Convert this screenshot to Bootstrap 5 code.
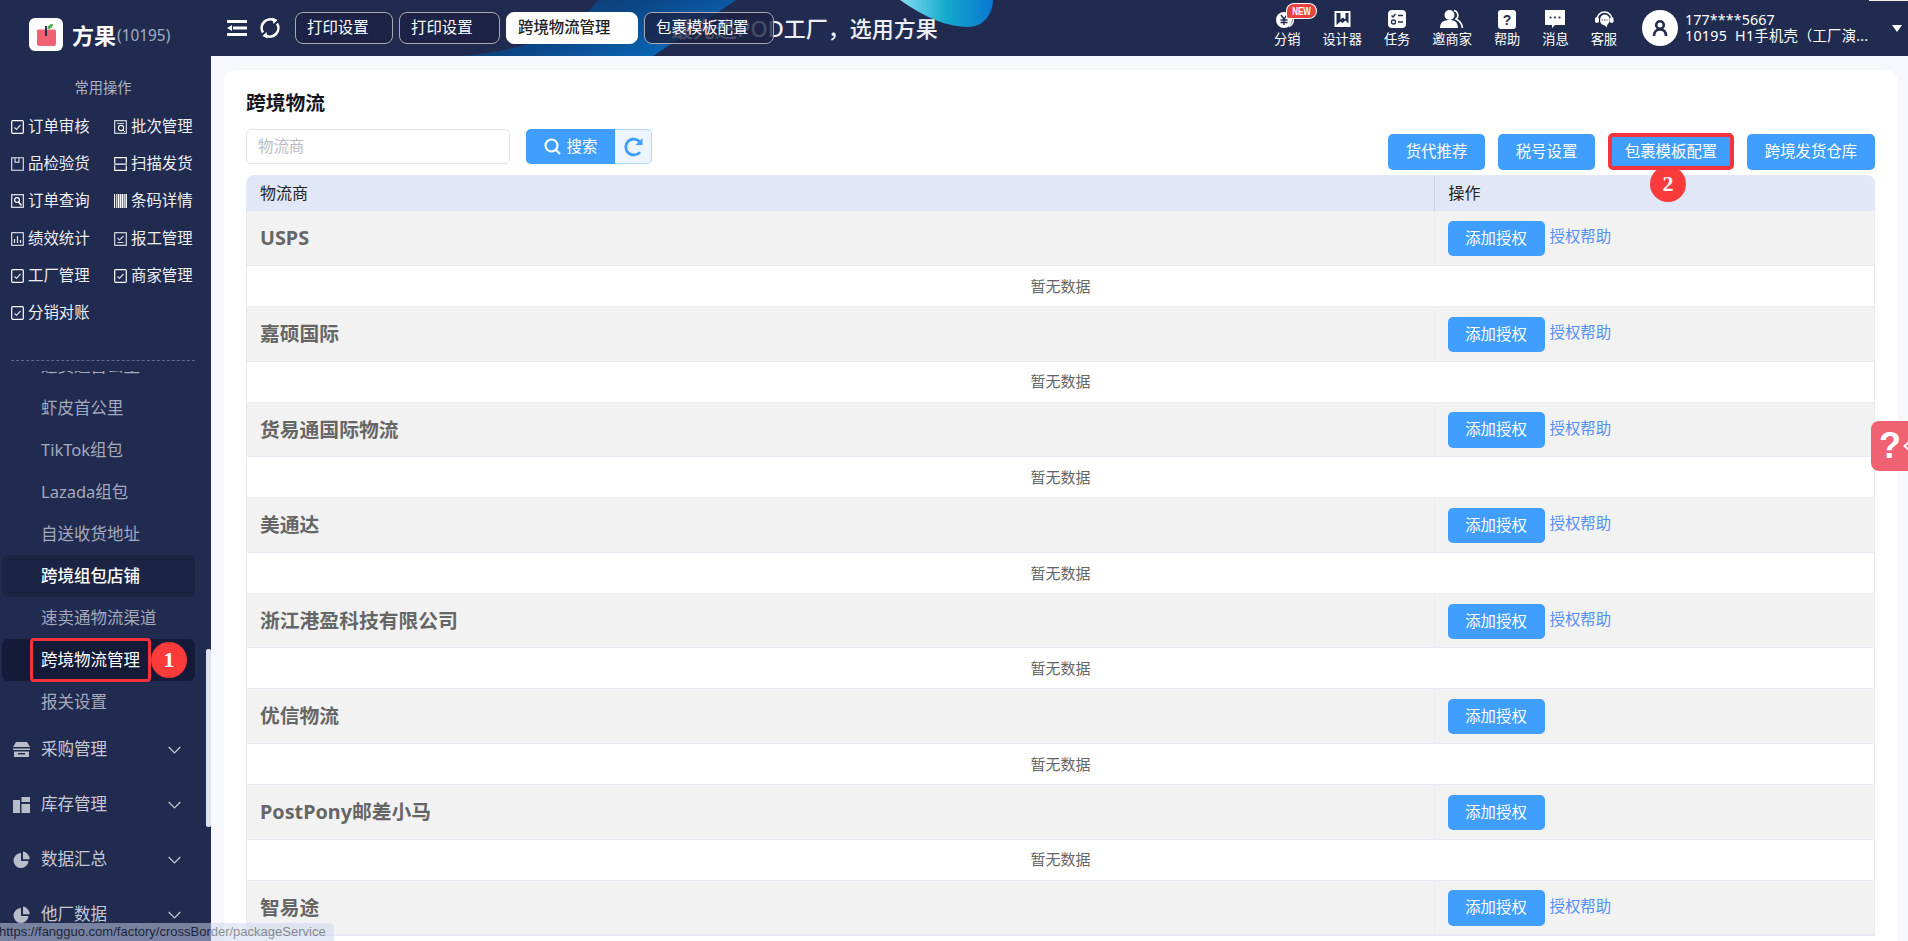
<!DOCTYPE html>
<html lang="zh-CN">
<head>
<meta charset="utf-8">
<title>跨境物流</title>
<link href="https://cdn.jsdelivr.net/npm/bootstrap@5.3.0/dist/css/bootstrap.min.css" rel="stylesheet">
<style>
html,body{height:100%;overflow:hidden}
body{font-family:"Noto Sans","Noto Sans CJK SC",sans-serif;font-size:15.4px;background:#f6f8fc;color:#222;position:relative}
.top-bar{height:56px;background:#212b50;position:relative;overflow:hidden;color:#fff}
.top-deco{position:absolute;left:0;top:0;width:1908px;height:56px}
.top-sliver{position:absolute;left:1869px;top:0;width:39px;height:1px;background:#f3eee2}
.top-slogan{position:absolute;left:671px;top:12px;font-size:22px;line-height:32px;font-weight:500;color:#eef0f5;white-space:nowrap}
.logo-zone{width:210px;height:56px;padding:13px 0 0 29px;position:relative;flex:none}
.logo-box{width:34px;height:33px;background:#fff;border-radius:6px;flex:none}
.logo-name{font-size:22px;font-weight:700;margin-left:9px;line-height:1}
.logo-id{font-size:15.4px;font-weight:400;color:#a3abc2;margin:2px 0 0 1px}
.tool-btn{width:85px;padding-left:17px;position:relative;flex:none;gap:12px}
.tab-row{position:relative;gap:6px}
.tab-pill{height:32px;border:1px solid #a7a9b3;border-radius:8px;background:rgba(28,34,68,.8);color:#fff;font-size:15.4px;line-height:30px;padding:0 11px;text-align:left;white-space:nowrap}
.tab-pill.on{background:#fff;color:#222;border-color:#fff;font-weight:500}
.t-a{width:98px}.t-b{width:101px}.t-c{width:132px}.t-d{width:130px}
.right-zone{position:relative;padding-right:6px}
.quick-row{gap:22px}
.quick-item{height:56px;padding-top:9px;font-size:13.2px;line-height:18px;white-space:nowrap;position:relative}
.quick-item svg{display:block;margin:0 auto 1px;height:20px}
.new-tag{position:absolute;left:13px;top:4px;width:29px;height:14px;background:#e8433c;color:#fff;border-radius:8px 8px 8px 2px;box-shadow:0 0 0 1px #fff;font-family:"Liberation Sans",sans-serif;text-align:center}
.new-tag b{display:block;font-size:10.5px;line-height:14px;transform:scaleX(.76)}
.user-face{width:36px;height:36px;background:#fff;border-radius:50%;margin-left:25px;flex:none}
.user-lines{width:200px;margin-left:7px;font-size:14.3px;line-height:16px;white-space:nowrap}
.user-lines .ln-a{letter-spacing:.1px}
.user-lines .ln-b{letter-spacing:.25px}
.user-caret{width:0;height:0;border-left:5px solid transparent;border-right:5px solid transparent;border-top:7px solid #fff;margin-left:7px;flex:none}

.shell{height:885px}
.side-col{width:211px;background:#212b50;height:885px;flex:none;position:relative;overflow:hidden}
.side-title{color:#aeb3c4;font-size:14.3px;text-align:center;line-height:20px;padding-top:22px;width:206px}
.quick-grid{display:grid;grid-template-columns:103px 103px;grid-auto-rows:37.2px;margin:10px 0 0 11px}
.quick-link{color:#eef0f4;font-size:15.4px;line-height:37.2px;white-space:nowrap;text-decoration:none}
.quick-link svg{width:13px;height:14px;margin-right:4px;vertical-align:-2px}
.side-cut{margin:29px 16px 0 11px;border-top:1px dashed #626a85;height:11px}
.side-scroll{height:569px;overflow:hidden;padding-right:16px}
.side-inner{margin-top:-26px}
.sub-item{height:42px;line-height:42px;padding-left:39px;margin-left:2px;font-size:16.5px;color:#a4a9bb;border-radius:6px;white-space:nowrap}
.sub-item.open{background:#1b2443;color:#fff;font-weight:500}
.sub-item.now{background:#141a38;color:#fff;position:relative}
.mark-box{position:absolute;left:28px;top:-1px;width:121px;height:44px;border:3px solid #f4333c;border-radius:4px}
.step-dot{position:absolute;width:36px;height:36px;border-radius:50%;background:#f93b3b;color:#fff;font-family:"Liberation Serif",serif;font-weight:700;font-size:22px;line-height:36px;text-align:center}
.step-one{left:149px;top:3px}
.group-item{height:55px;padding-left:13px;color:#c6c9d5;font-size:16.5px}
.sub-item+.group-item{margin-top:-1px}
.group-item svg.gi{width:17px;height:17px;margin-right:11px;flex:none}
.group-item svg.ch{width:13px;height:8px;margin-left:auto;margin-right:14px}
.side-thumb{position:absolute;left:206px;top:593px;width:5px;height:178px;border-radius:2px;background:#dfe2ea}

.main-pane{padding:14px 10px 0 13px;height:885px;overflow:hidden;flex:1 1 auto;min-width:0}
.sheet{background:#fff;border-radius:12px 12px 0 0;padding:21px 23px 0 22px;height:900px}
.sheet-title{font-size:19.8px;font-weight:700;line-height:24px;color:#15171f;margin-bottom:14px}
.tool-row{height:46px}
.search-input{width:264px;height:35px;border:1px solid #dfe2ec;border-radius:5px;font-size:15.4px;padding:0 11px;box-shadow:none}
.search-input::placeholder{color:#b9bcc4}
.search-go{width:89px;height:35px;background:#409eff;color:#fff;border:0;border-radius:5px 0 0 5px;font-size:15.4px;padding:0;margin-left:16px}
.search-go svg{width:17px;height:17px;margin-right:6px;vertical-align:-3px}
.search-re{width:37px;height:35px;background:#ecf5ff;border:1px solid #b3d8ff;border-left:0;border-radius:0 5px 5px 0;padding:0}
.search-re svg{width:21px;height:20px;display:block;margin:auto}
.blue-btn{background:#409eff;color:#fff;border:0;border-radius:5px;font-size:15.4px;height:36px;padding:0;white-space:nowrap}
.blue-btn:hover{background:#409eff;color:#fff}
.w97{width:97px}.w128{width:128px}
.marked-wrap{position:relative}
.marked-wrap .blue-btn{position:relative;width:126px;height:37px;border:4px solid #f4333c;line-height:27px;z-index:2;display:block}
.step-two{left:42px;top:33px;z-index:1}
.btn-cluster{margin-top:4px;gap:13px}

.grid-wrap{border:1px solid #e6e9f2;border-top:0;border-radius:8px 8px 0 0;overflow:hidden}
.table.wl-table{margin:0;table-layout:fixed;width:100%;--bs-table-bg:transparent}
.table.wl-table>thead>tr>th{height:36px;background:#e1e7f6;color:#222;font-size:16px;font-weight:400;padding:0 14px;border-bottom:0;vertical-align:middle}
.table.wl-table>thead>tr>th:first-child{padding-left:13px}
.table.wl-table>thead>tr>th+th{border-left:1px solid #cdd3e6}
.table.wl-table>tbody>tr>td{padding:0 13px;vertical-align:middle;border-bottom:1px solid #e9ecf4}
.table.wl-table>tbody>tr.vendor>td{height:54.6px;background:#f2f2f2}
.table.wl-table>tbody>tr.vendor>td+td{border-left:1px solid #ebebf0}
.table.wl-table>tbody>tr.none>td{height:41px;background:#fff;text-align:center;color:#666;font-size:15px}
.vendor-name{font-size:19.8px;font-weight:700;color:#666}
.add-btn{width:97px;height:35.2px;background:#409eff;color:#fff;border:0;border-radius:5px;font-size:15.4px;padding:0;vertical-align:middle;margin-top:1px}
.help-link{color:#5490f2;text-decoration:none;font-size:15.4px;margin-left:5px;vertical-align:0}
.col-ops{width:440px}
.float-help{position:absolute;left:1871px;top:421px;width:37px;height:50px;background:#f06272;border-radius:8px 0 0 8px;overflow:hidden;color:#fff;font-family:"Liberation Sans",sans-serif;font-weight:700;font-size:36px;line-height:50px;padding-left:8px}
.float-help svg{position:absolute;left:32px;top:20px;width:7px;height:10px}
.url-tip{position:absolute;left:0;top:923px;width:334px;height:18px;background:#cdd7f0;color:#191c28;opacity:.5;border-radius:0 5px 0 0;font-family:"Liberation Sans",sans-serif;font-size:13px;line-height:18px;white-space:nowrap;overflow:hidden}
.url-tip span{margin-left:-1px;display:block}
</style>
</head>
<body>
<svg width="0" height="0" class="position-absolute">
<defs>
<symbol id="i-check" viewBox="0 0 13 14"><rect x=".7" y=".7" width="11.6" height="12.6" rx="1" fill="none" stroke="#fff" stroke-width="1.2"/><path d="M3.5 7.5l2 2 4-4.5" fill="none" stroke="#d5d8e2" stroke-width="1.2"/></symbol>
<symbol id="i-batch" viewBox="0 0 13 14"><rect x=".7" y=".7" width="11.6" height="12.6" fill="none" stroke="#e8eaf0" stroke-width="1.1"/><path d="M3 3.5h7" stroke="#c8ccd8" stroke-width="1"/><circle cx="7" cy="8" r="2.6" fill="none" stroke="#fff" stroke-width="1.1"/><path d="M9 10l2 2" stroke="#fff"/></symbol>
<symbol id="i-page" viewBox="0 0 13 14"><path d="M.7 .7h11.6v12.6H.7zM4 .7v4.5h4V.7" fill="none" stroke="#e8eaf0" stroke-width="1.1"/></symbol>
<symbol id="i-scan" viewBox="0 0 13 14"><path d="M.7 6V.7h11.6V6M.7 8.5v4.8h11.6V8.5M0 7.2h13" fill="none" stroke="#fff" stroke-width="1.2"/></symbol>
<symbol id="i-find" viewBox="0 0 13 14"><rect x=".7" y=".7" width="11.6" height="12.6" fill="none" stroke="#e8eaf0" stroke-width="1.2"/><circle cx="6" cy="6" r="2.4" fill="none" stroke="#fff" stroke-width="1.2"/><path d="M7.5 8l3 3.5" stroke="#fff" stroke-width="1.5"/></symbol>
<symbol id="i-bars" viewBox="0 0 13 14"><path d="M.6 0v14M2.8 0v14M6.6 0v14M10.2 0v14" stroke="#fff" stroke-width="1.1"/><path d="M4.7 0v14M8.4 0v14M12.2 0v14" stroke="#fff" stroke-width="1.5"/></symbol>
<symbol id="i-chart" viewBox="0 0 13 14"><rect x=".7" y=".7" width="11.6" height="12.6" fill="none" stroke="#e8eaf0" stroke-width="1.1"/><path d="M3.5 11V7M6.5 11V4M9.5 11V8" stroke="#e8eaf0" stroke-width="1.2"/></symbol>
<symbol id="i-report" viewBox="0 0 13 14"><rect x=".7" y=".7" width="11.6" height="12.6" fill="none" stroke="#e8eaf0" stroke-width="1.1"/><path d="M3.5 6l2 2 4-4M3.5 10.5h6" fill="none" stroke="#d5d8e2" stroke-width="1.1"/></symbol>
<symbol id="i-chev" viewBox="0 0 13 8"><path d="M.7 1l5.8 6 5.800-6" fill="none" stroke="#c6c9d5" stroke-width="1.2"/></symbol>
<symbol id="i-pie" viewBox="0 0 17 17"><path d="M8 2a7.5 7.5 0 1 0 7.5 8H8z" fill="#b9bdca"/><path d="M10 .6v7.6h6.600A7.6 7.6 0 0 0 10 .6z" fill="#b9bdca"/></symbol>
</defs>
</svg>

<header class="top-bar d-flex align-items-center">
  <svg class="top-deco" viewBox="0 0 1908 56" aria-hidden="true">
    <defs>
      <linearGradient id="dg" x1="0" y1="0" x2="1" y2=".5"><stop offset="0" stop-color="#1d2f5d"/><stop offset=".55" stop-color="#0b4687"/><stop offset="1" stop-color="#0a68b8"/></linearGradient>
      <linearGradient id="cg" x1="0" y1="0" x2="1" y2="0"><stop offset="0" stop-color="#86dcf2"/><stop offset=".5" stop-color="#14a9cc"/><stop offset="1" stop-color="#0a76d1"/></linearGradient>
    </defs>
    <path d="M463 56C530 50 575 30 598 0L736 0L653 56Z" fill="url(#dg)"/>
    <path d="M900 0C925 18 948 27 968 27C985 27 993 12 993 0Z" fill="url(#cg)"/>
  </svg>
  <span class="top-sliver"></span>
  <div class="top-slogan">最先进POD工厂，选用方果</div>
  <div class="logo-zone d-flex align-items-center">
    <span class="logo-box d-flex align-items-center justify-content-center">
      <svg width="19" height="22" viewBox="0 0 19 22"><path d="M0 7c0-1 1-1.500 2-1.500h15c1 0 2 .5 2 1.500v12.500a2.500 2.500 0 0 1-2.500 2.500h-14A2.500 2.500 0 0 1 0 19.500z" fill="#f06272"/><path d="M8 2h2v10H8z" fill="#2a2f45"/><path d="M10.500 5c0-3 2-5 5.500-5 0 3-2 5-5.500 5z" fill="#4fae4e"/></svg>
    </span>
    <span class="logo-name">方果</span><span class="logo-id">(10195)</span>
  </div>
  <div class="tool-btn d-flex align-items-center">
    <svg width="20" height="16" viewBox="0 0 20 16" fill="#fff"><rect width="20" height="3"/><rect x="6" y="6.500" width="14" height="3"/><path d="M0 8l5-3v6z"/><rect y="13" width="20" height="3"/></svg>
    <svg width="22" height="22" viewBox="0 0 22 22" fill="none"><path d="M4 15.500A8.500 8.500 0 0 1 15.500 3.600" stroke="#fff" stroke-width="2.600"/><path d="M18 6.500A8.500 8.500 0 0 1 6.500 18.400" stroke="#fff" stroke-width="2.600"/><path d="M13.500 .5l5 2.500-4 4zM8.500 21.500l-5-2.500 4-4z" fill="#fff"/></svg>
  </div>
  <div class="tab-row d-flex">
    <button class="tab-pill t-a" type="button">打印设置</button>
    <button class="tab-pill t-b" type="button">打印设置</button>
    <button class="tab-pill t-c on" type="button">跨境物流管理</button>
    <button class="tab-pill t-d" type="button">包裹模板配置</button>
  </div>
  <div class="right-zone ms-auto d-flex align-items-center">
    <div class="quick-row d-flex">
      <div class="quick-item"><svg width="26" height="20" viewBox="0 0 26 20"><path d="M15 3.500a7.800 7.800 0 0 1 0 14" fill="none" stroke="#fff" stroke-width="1.600"/><circle cx="10" cy="11" r="8" fill="#fff"/><path d="M7 6l3 4 3-4M6.500 11h7M6.500 13.500h7M10 10v6" fill="none" stroke="#212b50" stroke-width="1.400"/></svg>分销<span class="new-tag"><b>NEW</b></span></div>
      <div class="quick-item"><svg width="17" height="20" viewBox="0 0 17 20"><path d="M.5 2h16v16H.5z" fill="#fff"/><path d="M2.500 4h12v10.500l-3-3-3 2.500-2-1.500-4 3.500z" fill="#212b50"/><path d="M6.500 4h5v6.500L9 8.500l-2.500 2z" fill="#fff"/></svg>设计器</div>
      <div class="quick-item"><svg width="18" height="20" viewBox="0 0 18 20"><rect y="1" width="18" height="18" rx="4" fill="#fff"/><path d="M3.500 6.500l1.500 1.500 2.500-3M10 6.500h5M10 13h5" fill="none" stroke="#212b50" stroke-width="1.400"/><circle cx="5.500" cy="13" r="2" fill="none" stroke="#212b50" stroke-width="1.300"/></svg>任务</div>
      <div class="quick-item"><svg width="24" height="20" viewBox="0 0 24 20"><circle cx="9.500" cy="6" r="5" fill="#fff"/><path d="M0 19c0-6 4-8 9.500-8s8 2 8.500 8z" fill="#fff"/><path d="M14 1.500a4.800 4.800 0 0 1 2 8.500c3 1.500 6 4 6.500 9" fill="none" stroke="#fff" stroke-width="1.600"/></svg>邀商家</div>
      <div class="quick-item"><svg width="18" height="20" viewBox="0 0 18 20"><rect y="1" width="18" height="19" rx="3" fill="#fff"/><text x="9" y="15.500" text-anchor="middle" font-size="14" font-weight="700" font-family="Liberation Sans" fill="#212b50">?</text></svg>帮助</div>
      <div class="quick-item"><svg width="20" height="20" viewBox="0 0 20 20"><path d="M0 1h20v15H10l-3 3v-3H0z" fill="#fff"/><circle cx="5.500" cy="8.500" r="1.100" fill="#212b50"/><circle cx="10" cy="8.500" r="1.100" fill="#212b50"/><circle cx="14.500" cy="8.500" r="1.100" fill="#212b50"/></svg>消息</div>
      <div class="quick-item"><svg width="22" height="20" viewBox="0 0 22 20"><path d="M4 10.500a7.500 7.500 0 0 1 15 0" fill="none" stroke="#fff" stroke-width="1.600"/><rect x="2" y="8" width="4" height="6" rx="2" fill="#fff"/><rect x="17" y="8" width="3.500" height="6" rx="1.700" fill="#fff"/><path d="M11.500 5.500a5.500 5.500 0 0 1 3.500 9.500c-.7.700-1 1.500-1 3.500-2-2-3-2.500-3.500-2.500a5.500 5.500 0 0 1 1-10.500z" fill="#fff"/><path d="M8.500 11h6" stroke="#212b50" stroke-width="1.100" stroke-dasharray="1.400 1.100"/></svg>客服</div>
    </div>
    <span class="user-face d-flex align-items-center justify-content-center"><svg width="16" height="18" viewBox="0 0 16 18" fill="none" stroke="#212b50" stroke-width="2.600"><circle cx="8" cy="6" r="3.800"/><path d="M2 17c0-4 2-6.500 6-6.500s6 2.500 6 6.500"/></svg></span>
    <div class="user-lines"><div class="ln-a">177****5667</div><div class="ln-b">10195&nbsp; H1手机壳（工厂演...</div></div>
    <span class="user-caret"></span>
  </div>
</header>

<div class="shell d-flex">
  <aside class="side-col">
    <div class="side-title">常用操作</div>
    <div class="quick-grid">
      <a class="quick-link"><svg><use href="#i-check"/></svg>订单审核</a>
      <a class="quick-link"><svg><use href="#i-batch"/></svg>批次管理</a>
      <a class="quick-link"><svg><use href="#i-page"/></svg>品检验货</a>
      <a class="quick-link"><svg><use href="#i-scan"/></svg>扫描发货</a>
      <a class="quick-link"><svg><use href="#i-find"/></svg>订单查询</a>
      <a class="quick-link"><svg><use href="#i-bars"/></svg>条码详情</a>
      <a class="quick-link"><svg><use href="#i-chart"/></svg>绩效统计</a>
      <a class="quick-link"><svg><use href="#i-report"/></svg>报工管理</a>
      <a class="quick-link"><svg><use href="#i-check"/></svg>工厂管理</a>
      <a class="quick-link"><svg><use href="#i-check"/></svg>商家管理</a>
      <a class="quick-link"><svg><use href="#i-check"/></svg>分销对账</a>
    </div>
    <div class="side-cut"></div>
    <div class="side-scroll">
      <div class="side-inner">
        <div class="sub-item">速卖通首公里</div>
        <div class="sub-item">虾皮首公里</div>
        <div class="sub-item">TikTok组包</div>
        <div class="sub-item">Lazada组包</div>
        <div class="sub-item">自送收货地址</div>
        <div class="sub-item open">跨境组包店铺</div>
        <div class="sub-item">速卖通物流渠道</div>
        <div class="sub-item now">跨境物流管理<span class="mark-box"></span><span class="step-dot step-one">1</span></div>
        <div class="sub-item">报关设置</div>
        <div class="group-item d-flex align-items-center"><svg class="gi" viewBox="0 0 17 17"><path d="M3 1h11l3 5H0zM0 7.500h17V9H0zM1 10.500h15V16H1z" fill="#b9bdca"/><path d="M5 12h7v1.500H5z" fill="#212b50"/></svg>采购管理<svg class="ch"><use href="#i-chev"/></svg></div>
        <div class="group-item d-flex align-items-center"><svg class="gi" viewBox="0 0 17 17" fill="#b9bdca"><path d="M0 4h7v13H0zM8.500 1H17v5H8.500zM8.500 8H17v9H8.500z"/></svg>库存管理<svg class="ch"><use href="#i-chev"/></svg></div>
        <div class="group-item d-flex align-items-center"><svg class="gi"><use href="#i-pie"/></svg>数据汇总<svg class="ch"><use href="#i-chev"/></svg></div>
        <div class="group-item d-flex align-items-center"><svg class="gi"><use href="#i-pie"/></svg>他厂数据<svg class="ch"><use href="#i-chev"/></svg></div>
      </div>
    </div>
    <div class="side-thumb"></div>
  </aside>

  <main class="main-pane">
    <section class="sheet">
      <div class="sheet-title">跨境物流</div>
      <div class="tool-row d-flex justify-content-between align-items-start">
        <div class="d-flex">
          <input class="form-control search-input" type="text" placeholder="物流商">
          <button class="search-go" type="button"><svg viewBox="0 0 17 17" fill="none" stroke="#fff" stroke-width="2.200"><circle cx="7.500" cy="7.500" r="6"/><path d="M12 12l4 4"/></svg>搜索</button>
          <button class="search-re" type="button"><svg viewBox="0 0 21 20" fill="none"><path d="M17 15a8 8 0 1 1 0-10" stroke="#409eff" stroke-width="2.800"/><path d="M19.500 1v7h-7z" fill="#409eff"/></svg></button>
        </div>
        <div class="btn-cluster d-flex align-items-center">
          <button class="btn blue-btn w97" type="button">货代推荐</button>
          <button class="btn blue-btn w97" type="button">税号设置</button>
          <div class="marked-wrap"><button class="btn blue-btn" type="button">包裹模板配置</button><span class="step-dot step-two">2</span></div>
          <button class="btn blue-btn w128" type="button">跨境发货仓库</button>
        </div>
      </div>
      <div class="grid-wrap">
        <table class="table wl-table">
          <thead><tr><th>物流商</th><th class="col-ops">操作</th></tr></thead>
          <tbody>
            <tr class="vendor"><td><span class="vendor-name">USPS</span></td><td><button class="add-btn" type="button">添加授权</button><a class="help-link" href="#">授权帮助</a></td></tr>
            <tr class="none"><td colspan="2">暂无数据</td></tr>
            <tr class="vendor"><td><span class="vendor-name">嘉硕国际</span></td><td><button class="add-btn" type="button">添加授权</button><a class="help-link" href="#">授权帮助</a></td></tr>
            <tr class="none"><td colspan="2">暂无数据</td></tr>
            <tr class="vendor"><td><span class="vendor-name">货易通国际物流</span></td><td><button class="add-btn" type="button">添加授权</button><a class="help-link" href="#">授权帮助</a></td></tr>
            <tr class="none"><td colspan="2">暂无数据</td></tr>
            <tr class="vendor"><td><span class="vendor-name">美通达</span></td><td><button class="add-btn" type="button">添加授权</button><a class="help-link" href="#">授权帮助</a></td></tr>
            <tr class="none"><td colspan="2">暂无数据</td></tr>
            <tr class="vendor"><td><span class="vendor-name">浙江港盈科技有限公司</span></td><td><button class="add-btn" type="button">添加授权</button><a class="help-link" href="#">授权帮助</a></td></tr>
            <tr class="none"><td colspan="2">暂无数据</td></tr>
            <tr class="vendor"><td><span class="vendor-name">优信物流</span></td><td><button class="add-btn" type="button">添加授权</button></td></tr>
            <tr class="none"><td colspan="2">暂无数据</td></tr>
            <tr class="vendor"><td><span class="vendor-name">PostPony邮差小马</span></td><td><button class="add-btn" type="button">添加授权</button></td></tr>
            <tr class="none"><td colspan="2">暂无数据</td></tr>
            <tr class="vendor"><td><span class="vendor-name">智易途</span></td><td><button class="add-btn" type="button">添加授权</button><a class="help-link" href="#">授权帮助</a></td></tr>
          </tbody>
        </table>
      </div>
    </section>
  </main>
</div>

<div class="float-help">?<svg viewBox="0 0 7 10"><path d="M6 1L1.500 5 6 9" fill="none" stroke="#fff" stroke-width="2"/></svg></div>
<div class="url-tip"><span>https://fangguo.com/factory/crossBorder/packageService</span></div>
<script src="https://cdn.jsdelivr.net/npm/bootstrap@5.3.0/dist/js/bootstrap.bundle.min.js"></script>
</body>
</html>
